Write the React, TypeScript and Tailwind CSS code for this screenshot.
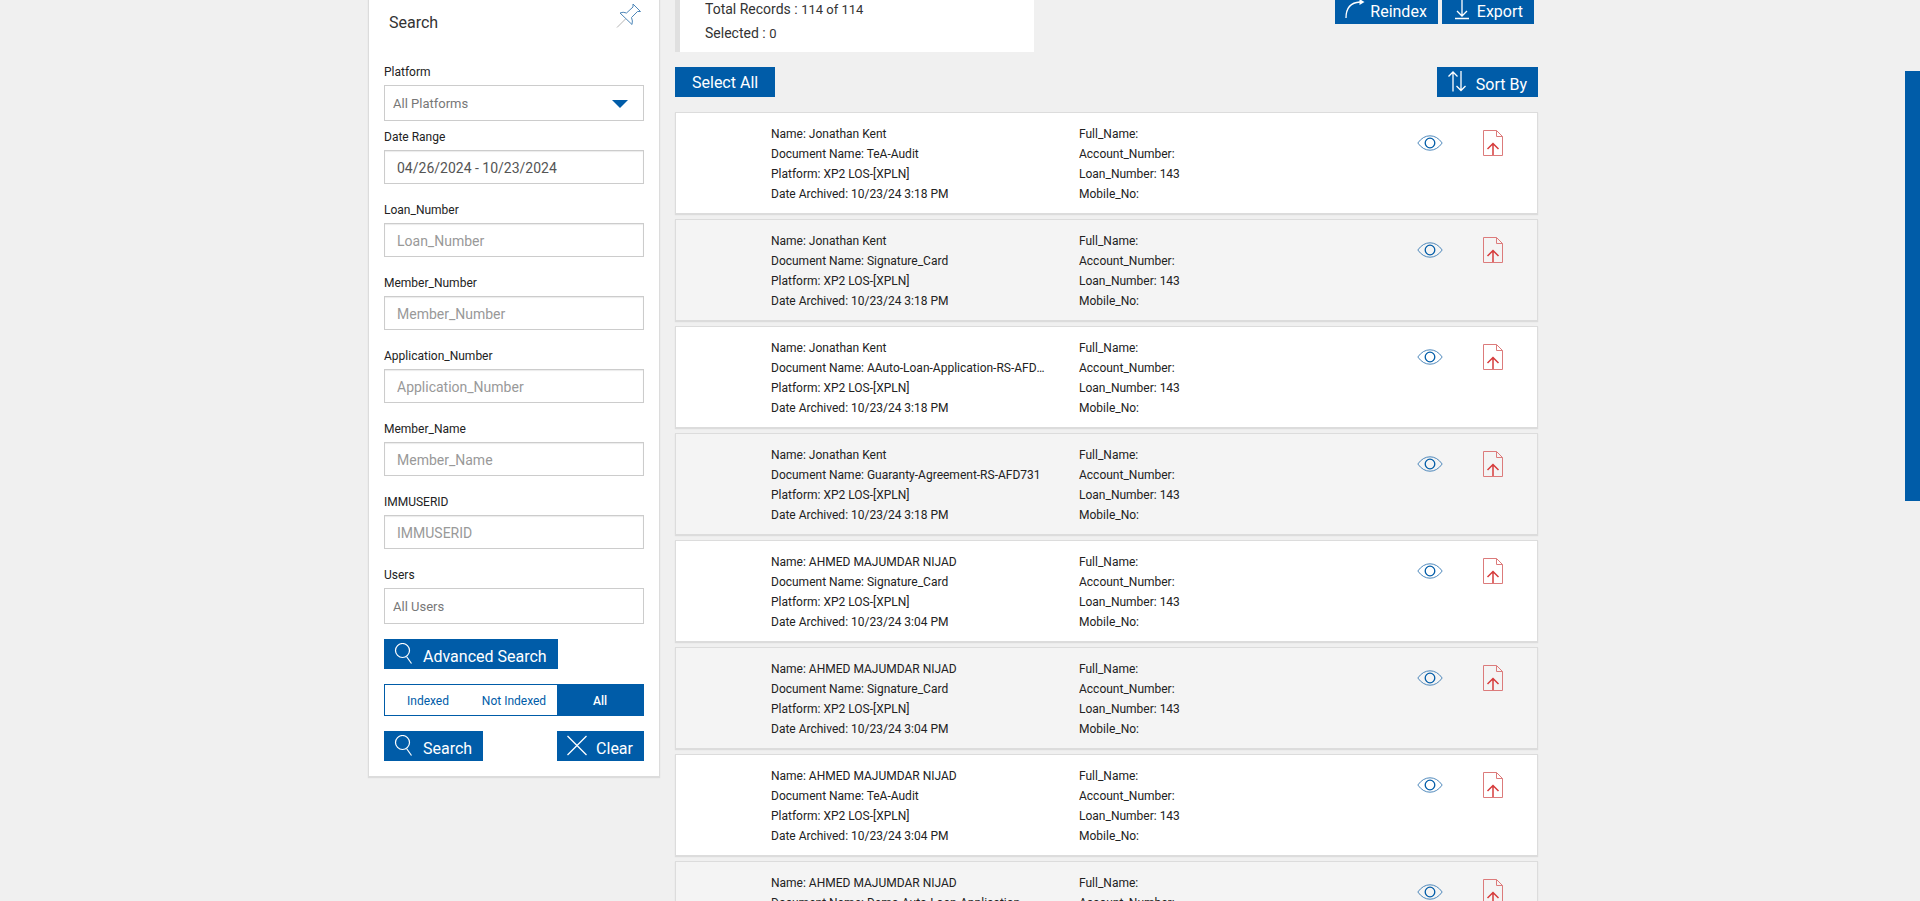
import { useState } from 'react'
import type { ReactNode } from 'react'

type DocumentRecord = {
  name: string
  documentName: string
  time: string
}

const records: DocumentRecord[] = [
  { name: 'Jonathan Kent', documentName: 'TeA-Audit', time: '3:18 PM' },
  { name: 'Jonathan Kent', documentName: 'Signature_Card', time: '3:18 PM' },
  { name: 'Jonathan Kent', documentName: 'AAuto-Loan-Application-RS-AFD731', time: '3:18 PM' },
  { name: 'Jonathan Kent', documentName: 'Guaranty-Agreement-RS-AFD731', time: '3:18 PM' },
  { name: 'AHMED MAJUMDAR NIJAD', documentName: 'Signature_Card', time: '3:04 PM' },
  { name: 'AHMED MAJUMDAR NIJAD', documentName: 'Signature_Card', time: '3:04 PM' },
  { name: 'AHMED MAJUMDAR NIJAD', documentName: 'TeA-Audit', time: '3:04 PM' },
  { name: 'AHMED MAJUMDAR NIJAD', documentName: 'Demo-Auto-Loan-Application', time: '3:04 PM' },
]

const textFields = ['Loan_Number', 'Member_Number', 'Application_Number', 'Member_Name', 'IMMUSERID']

const statuses = ['Indexed', 'Not Indexed', 'All']

function PinIcon() {
  return (
    <svg width="26" height="26" viewBox="0 0 26 26" fill="none" stroke="#4d86b8" strokeWidth="1">
      <path d="M17 2 24.500 9.500 21.500 9.500 15.500 15.500Q17 19 16 22.500L4 11Q7 9.500 10.500 11L17 5z" />
      <path d="M9.500 17 1 25.500" stroke="#b3b3b3" />
    </svg>
  )
}

function SearchIcon() {
  return (
    <svg width="20" height="22" viewBox="0 0 20 22" fill="none" stroke="currentColor" strokeWidth="1.2">
      <circle cx="8.500" cy="7.500" r="7" />
      <path d="m12.500 13.500 5 7" />
    </svg>
  )
}

function CloseIcon() {
  return (
    <svg width="20" height="22" viewBox="0 0 20 22" fill="none" stroke="currentColor" strokeWidth="1.3">
      <path d="m.5 1 19 19M19.500 1 .5 20" />
    </svg>
  )
}

function ReindexIcon() {
  return (
    <svg width="20" height="22" viewBox="0 0 20 22" fill="none" stroke="currentColor" strokeWidth="1.3">
      <path d="M1 20C1 9 6 4.500 15 4" />
      <path d="m14.500 1 5 3-5 3z" fill="currentColor" stroke="none" />
    </svg>
  )
}

function ExportIcon() {
  return (
    <svg width="20" height="22" viewBox="0 0 20 22" fill="none" stroke="currentColor" strokeWidth="1.3">
      <path d="M10 0v17.500M5 13l5 5 5-5M3 20.500h14" />
    </svg>
  )
}

function SortIcon() {
  return (
    <svg width="20" height="22" viewBox="0 0 20 22" fill="none" stroke="currentColor" strokeWidth="1.3">
      <path d="M6 20.500V1M1.500 5.500 6 1 10.500 5.500M14 0v19.500M9.500 15l4.500 4.500 4.500-4.500" />
    </svg>
  )
}

function EyeIcon() {
  return (
    <svg width="26" height="16" viewBox="0 0 26 16" fill="none" stroke="#3a7ab3" strokeWidth="0.9">
      <path d="M.8 8Q6 .8 13 .8T25.200 8Q20 15.200 13 15.200T.8 8z" />
      <circle cx="13" cy="8" r="4.800" stroke="#005ca8" strokeWidth="1.3" />
    </svg>
  )
}

function FileUploadIcon() {
  return (
    <svg width="20" height="26" viewBox="0 0 20 26" fill="none" stroke="#dc7b7b" strokeWidth="1">
      <path d="M.5.5h13l6 6v19H.5z" />
      <path d="M13.500.5v6h6" />
      <path d="M10 25V14M4.500 19l5.500-5.500 5.500 5.500" stroke="#d63c3c" strokeWidth="1.5" />
    </svg>
  )
}

type ActionButtonProps = {
  icon: ReactNode
  compact?: boolean
  children: ReactNode
}

function ActionButton({ icon, compact = false, children }: ActionButtonProps) {
  return (
    <button
      type="button"
      className={`flex h-[30px] items-start bg-[#005ca8] pr-[11px] pl-2.5 text-base text-white ${compact ? 'gap-[5px]' : 'gap-[9px]'}`}
    >
      <span className="pt-1">{icon}</span>
      <span className="pt-1.5 leading-6">{children}</span>
    </button>
  )
}

function FieldLabel({ id, children }: { id: string; children: ReactNode }) {
  return (
    <label htmlFor={id} className="mb-1 block text-xs leading-[18px] text-[#222]">
      {children}
    </label>
  )
}

function SearchPanel() {
  const [status, setStatus] = useState('All')

  return (
    <aside className="w-[292px] shrink-0 border border-[#dcdcdc] bg-white px-[15px] pb-[15px] shadow-[0_1px_1px_#dcdcdc]">
      <div className="flex h-[78px] items-start justify-between pt-[17px] pl-[5px]">
        <h2 className="pt-[9px] text-base leading-6 text-[#333]">Search</h2>
        <button type="button" aria-label="Pin search panel" className="pr-0.5">
          <PinIcon />
        </button>
      </div>

      <FieldLabel id="platform">Platform</FieldLabel>
      <div className="relative">
        <select id="platform" className="block h-9 w-full appearance-none border border-[#ccc] bg-white px-2 pt-px text-[13px] text-[#777]">
          <option>All Platforms</option>
        </select>
        <svg width="16" height="8" viewBox="0 0 16 8" className="pointer-events-none absolute top-[15px] right-4">
          <path d="M0 0h16L8 8z" fill="#005ca8" />
        </svg>
      </div>

      <div className="mt-[7px]">
        <FieldLabel id="date-range">Date Range</FieldLabel>
        <input
          id="date-range"
          defaultValue="04/26/2024 - 10/23/2024"
          className="block h-[34px] w-full border border-[#ccc] px-3 pt-0.5 text-sm text-[#555] shadow-[inset_0_1px_1px_#ececec]"
        />
      </div>

      {textFields.map((field) => (
        <div key={field} className="mt-[17px]">
          <FieldLabel id={field}>{field}</FieldLabel>
          <input
            id={field}
            placeholder={field}
            className="block h-[34px] w-full border border-[#ccc] px-3 pt-0.5 text-sm text-[#555] shadow-[inset_0_1px_1px_#ececec] placeholder:text-[#999]"
          />
        </div>
      ))}

      <div className="mt-[17px]">
        <FieldLabel id="users">Users</FieldLabel>
        <select id="users" className="block h-9 w-full appearance-none border border-[#ccc] bg-white px-2 pt-px text-[13px] text-[#777]">
          <option>All Users</option>
        </select>
      </div>

      <div className="mt-[15px] flex">
        <ActionButton icon={<SearchIcon />}>Advanced Search</ActionButton>
      </div>

      <div className="mt-[15px] grid h-8 grid-cols-3 border border-[#005ca8] text-xs">
        {statuses.map((item) => (
          <button
            key={item}
            type="button"
            onClick={() => setStatus(item)}
            className={item === status ? 'bg-[#005ca8] pt-0.5 font-medium text-white' : 'pt-0.5 text-[#005ca8]'}
          >
            {item}
          </button>
        ))}
      </div>

      <div className="mt-[15px] flex justify-between">
        <ActionButton icon={<SearchIcon />}>Search</ActionButton>
        <ActionButton icon={<CloseIcon />}>Clear</ActionButton>
      </div>
    </aside>
  )
}

function RecordCard({ record }: { record: DocumentRecord }) {
  return (
    <li className="flex border border-[#dcdcdc] bg-white pt-[11px] pr-[34px] pb-[9px] pl-[95px] text-xs leading-5 text-[#222] shadow-[0_1px_1px_#dcdcdc] even:bg-[#f4f4f4]">
      <div className="w-[278px]">
        <p>Name: {record.name}</p>
        <p className="truncate">Document Name: {record.documentName}</p>
        <p>Platform: XP2 LOS-[XPLN]</p>
        <p>Date Archived: 10/23/24 {record.time}</p>
      </div>
      <div className="ml-[30px] flex-1">
        <p>Full_Name:</p>
        <p>Account_Number:</p>
        <p>Loan_Number: 143</p>
        <p>Mobile_No:</p>
      </div>
      <div className="flex items-start gap-10 pt-1.5">
        <button type="button" aria-label="View document" className="pt-[5px]">
          <EyeIcon />
        </button>
        <button type="button" aria-label="Upload document">
          <FileUploadIcon />
        </button>
      </div>
    </li>
  )
}

export default function App() {
  return (
    <div className="relative h-screen overflow-hidden bg-[#f0f0f0] pr-[14px] font-[Roboto,sans-serif]">
      <div className="mx-auto -mt-4 flex max-w-[1170px] items-start gap-[15px]">
        <SearchPanel />

        <main className="min-w-0 flex-1">
          <div className="flex items-start justify-between">
            <div className="w-[359px] border-l-[5px] border-[#e0e0e0] bg-white pt-[13px] pb-[7px] pl-[25px] text-sm leading-6 text-[#333]">
              <p className="h-6">
                Total Records : <span className="text-[13px]">114 of 114</span>
              </p>
              <p className="h-6">
                Selected : <span className="text-[13px]">0</span>
              </p>
            </div>
            <div className="flex gap-1 pt-[10px] pr-1">
              <ActionButton compact icon={<ReindexIcon />}>Reindex</ActionButton>
              <ActionButton compact icon={<ExportIcon />}>Export</ActionButton>
            </div>
          </div>

          <div className="my-[15px] flex justify-between">
            <button type="button" className="h-[30px] bg-[#005ca8] px-[17px] pt-0.5 text-base text-white">
              Select All
            </button>
            <ActionButton icon={<SortIcon />}>Sort By</ActionButton>
          </div>

          <ul className="flex flex-col gap-[5px]">
            {records.map((record, index) => (
              <RecordCard key={index} record={record} />
            ))}
          </ul>
        </main>
      </div>

      <div className="absolute top-[71px] right-0 h-[430px] w-[15px] bg-[#005ca8]" />
    </div>
  )
}
